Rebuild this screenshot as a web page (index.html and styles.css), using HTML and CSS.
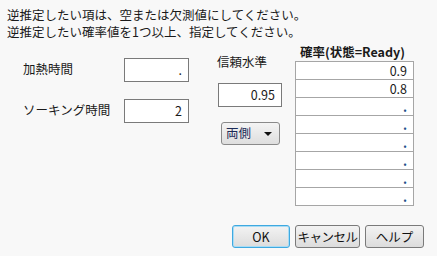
FILE: index.html
```html
<!DOCTYPE html>
<html lang="ja">
<head>
    <meta charset="UTF-8">
    <title>逆推定</title>
    <link rel="stylesheet" href="styles.css">
</head>
<body>
    <div class="dlg">
        <p class="note">逆推定したい項は、空または欠測値にしてください。<br>逆推定したい確率値を1つ以上、指定してください。</p>

        <div class="panel">
            <div class="factors">
                <div class="row">
                    <span class="lbl">加熱時間</span>
                    <div class="box">.</div>
                </div>
                <div class="row">
                    <span class="lbl">ソーキング時間</span>
                    <div class="box">2</div>
                </div>
            </div>

            <div class="conf">
                <span class="lbl">信頼水準</span>
                <div class="box">0.95</div>
                <div class="select">両側<span class="arrow"></span></div>
            </div>

            <div class="prob">
                <div class="head">確率(状態=Ready)</div>
                <table>
                    <tr><td>0.9</td></tr>
                    <tr><td>0.8</td></tr>
                    <tr><td class="dot">.</td></tr>
                    <tr><td class="dot">.</td></tr>
                    <tr><td class="dot">.</td></tr>
                    <tr><td class="dot">.</td></tr>
                    <tr><td class="dot">.</td></tr>
                    <tr><td class="dot">.</td></tr>
                </table>
            </div>
        </div>

        <div class="buttons">
            <button class="btn ok">OK</button>
            <button class="btn cancel">キャンセル</button>
            <button class="btn help">ヘルプ</button>
        </div>
    </div>
</body>
</html>
```

FILE: styles.css
```css
body {
    margin: 0;
    background-color: #f8f8f8;
    font-family: "Noto Sans CJK JP", "Noto Sans", sans-serif;
    font-size: 12px;
    color: #1a1a1a;
}
.dlg {
    width: 437px;
    height: 256px;
    overflow: hidden;
}
.note {
    margin: 0;
    padding: 6px 0 0 7px;
    line-height: 17px;
    font-size: 12.5px;
    height: 34px;
}
.panel {
    display: flex;
    align-items: flex-start;
}
.factors {
    margin-left: 23px;
    margin-top: 18px;
    display: flex;
    flex-direction: column;
    gap: 17px;
}
.row {
    display: flex;
    align-items: center;
}
.row .lbl {
    width: 101px;
    margin-top: -4px;
}
.lbl {
    line-height: 17px;
    font-size: 12.5px;
}
.box {
    box-sizing: border-box;
    width: 65px;
    height: 24px;
    background: #ffffff;
    border: 1px solid #7a7a7a;
    text-align: right;
    padding-right: 6px;
    line-height: 21px;
    font-size: 12.5px;
}
.conf {
    margin-left: 28px;
    margin-top: 13px;
    display: flex;
    flex-direction: column;
}
.conf .box {
    width: 64px;
    margin-top: 13px;
    margin-left: 1px;
}
.select {
    box-sizing: border-box;
    width: 59px;
    height: 23px;
    margin-top: 15px;
    margin-left: 4px;
    border: 1px solid #8a8a8a;
    border-radius: 3px;
    background: linear-gradient(#f4f4f4, #dedede);
    padding-left: 4px;
    line-height: 20px;
    font-size: 12.5px;
    color: #1b2a56;
    position: relative;
}
.arrow {
    position: absolute;
    right: 7px;
    top: 9px;
    border-left: 4px solid transparent;
    border-right: 4px solid transparent;
    border-top: 4px solid #111;
}
.prob {
    margin-left: 13px;
    margin-top: 3px;
}
.head {
    height: 18px;
    line-height: 17px;
    font-weight: bold;
    font-size: 12.5px;
    padding-left: 5px;
}
table {
    border-collapse: collapse;
    width: 119px;
    background: #ffffff;
}
td {
    box-sizing: border-box;
    border: 1px solid #a6a6a6;
    height: 18px;
    padding: 0 6px 0 0;
    text-align: right;
    line-height: 16px;
    font-size: 12.5px;
}
td.dot {
    color: #23508a;
    font-weight: bold;
}
.buttons {
    display: flex;
    justify-content: flex-end;
    gap: 5px;
    margin-top: 19px;
    padding-right: 13px;
}
.btn {
    box-sizing: border-box;
    height: 23px;
    border: 1px solid #7a7a7a;
    border-radius: 3px;
    background: linear-gradient(#f3f3f3, #dcdcdc);
    font-family: "Noto Sans CJK JP", "Noto Sans", sans-serif;
    font-size: 12.5px;
    color: #111;
    padding: 0;
    line-height: 20px;
}
.ok {
    width: 58px;
    border-color: #3fa9e0;
    box-shadow: inset 0 0 0 1px #a8dcf5;
}
.cancel {
    width: 65px;
    letter-spacing: -0.5px;
}
.help {
    width: 59px;
}
```
